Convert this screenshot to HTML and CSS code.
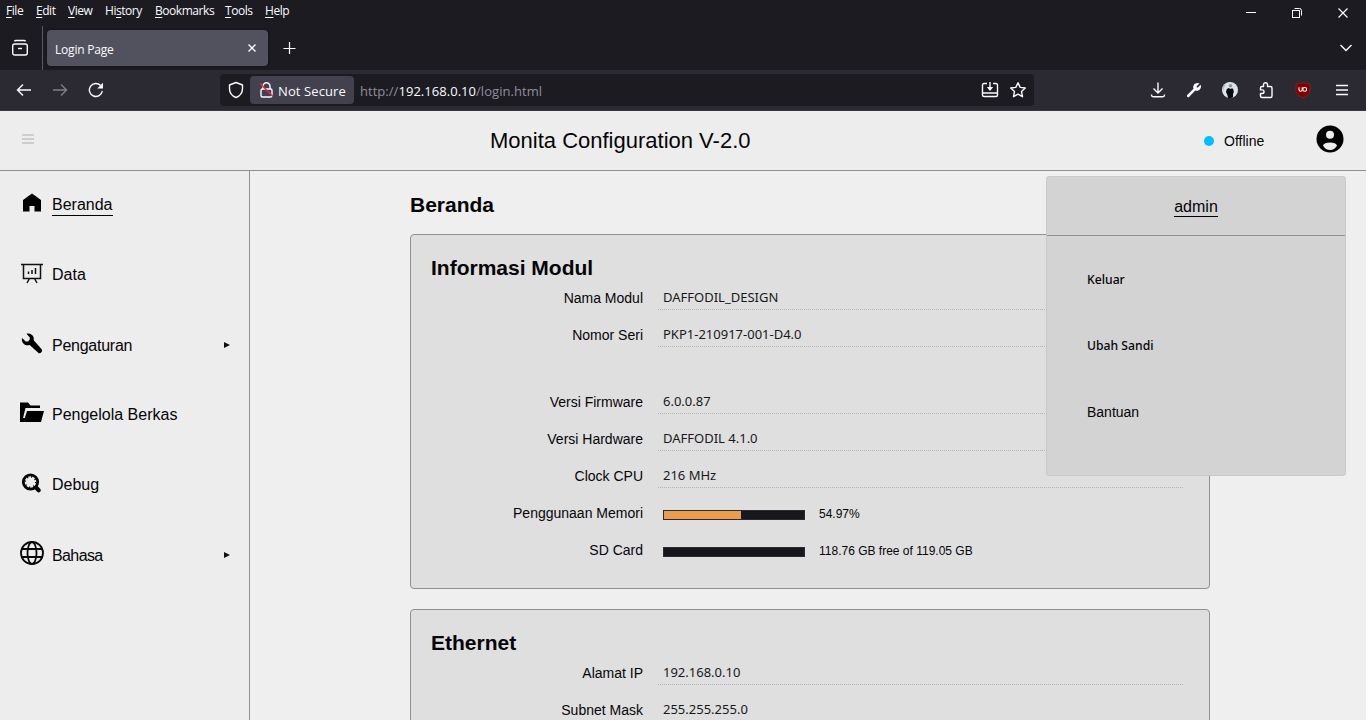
FILE: index.html
```html
<!DOCTYPE html>
<html lang="id">
<head>
<meta charset="utf-8">
<title>Login Page</title>
<link rel="stylesheet" href="styles.css">
</head>
<body>
<div class="window">
  <div class="menubar">
    <nav class="menus">
      <span class="m-file"><u>F</u>ile</span><span class="m-edit"><u>E</u>dit</span><span class="m-view"><u>V</u>iew</span><span class="m-history">Hi<u>s</u>tory</span><span class="m-book"><u>B</u>ookmarks</span><span class="m-tools"><u>T</u>ools</span><span><u>H</u>elp</span>
    </nav>
    <div class="winbtns">
      <svg width="12" height="12" viewBox="0 0 12 12"><path d="M1 5.5h10"/></svg>
      <svg width="12" height="12" viewBox="0 0 12 12"><rect x="1.500" y="3.500" width="7" height="7"/><path d="M3.500 1.500h5q2 0 2 2v5"/></svg>
      <svg width="12" height="12" viewBox="0 0 12 12"><path d="M1.500 1.500l9 9M10.500 1.500l-9 9" stroke-width="1.200"/></svg>
    </div>
  </div>
  <div class="tabstrip">
    <div class="recent"><svg width="18" height="18" viewBox="0 0 18 18"><path d="M3.300 2.200Q4 1.500 5 1.500h8q1 0 1.700.7"/><rect x="1.700" y="5" width="14.600" height="11" rx="2"/><path d="M7 9.500h4"/></svg></div>
    <div class="tab"><span>Login Page</span><svg width="10" height="10" viewBox="0 0 10 10"><path d="M1.500 1.500l7 7M8.500 1.500l-7 7"/></svg></div>
    <svg class="newtab" width="14" height="14" viewBox="0 0 14 14"><path d="M6.500 1v12M.5 7.500h12"/></svg>
    <svg class="alltabs" width="14" height="10" viewBox="0 0 14 10"><path d="M1.500 2L7 7.500 12.500 2"/></svg>
  </div>
  <div class="toolbar">
    <div class="navbtns">
      <svg width="16" height="16" viewBox="0 0 16 16"><path d="M15 8H1.500M7 2.500L1.500 8 7 13.500"/></svg>
      <svg class="dim" width="16" height="16" viewBox="0 0 16 16"><path d="M1 8h13.500M9 2.500L14.500 8 9 13.500"/></svg>
      <svg width="16" height="16" viewBox="0 0 16 16"><path d="M14.300 9A6.500 6.500 0 1 1 12.600 3.500"/><path class="solid" d="M15 .8v5.700H9.300z"/></svg>
    </div>
    <div class="urlbar">
      <svg class="shield" width="16" height="18" viewBox="0 0 16 18"><path d="M8 1.500L14.500 4v3.500c0 4.500-2.500 7.500-6.500 9-4-1.500-6.500-4.500-6.500-9V4z" stroke-linejoin="round"/></svg>
      <div class="insecure"><svg width="15" height="18" viewBox="0 0 15 18"><path d="M4 8V5.200a3.500 3.500 0 0 1 7 0V8"/><rect x="2" y="8" width="11" height="8" rx="1.500"/><path class="strike" d="M1 2.500l13 13"/></svg><span>Not Secure</span></div>
      <span class="url">http://<b>192.168.0.10</b>/login.html</span>
      <svg class="install" width="18" height="16" viewBox="0 0 18 16"><path d="M6 1.500H3q-1.500 0-1.500 1.500v10q0 1.500 1.500 1.500h12q1.500 0 1.500-1.500V3q0-1.500-1.500-1.500h-3M1.500 11h15M9 0v6"/><path class="solid" d="M5.800 5h6.400L9 9z"/></svg>
      <svg class="star" width="18" height="18" viewBox="0 0 18 18"><path d="M9 1.700l2.200 4.700 5.100.6-3.800 3.500 1 5.200L9 13.200l-4.500 2.500 1-5.200L1.700 7l5.100-.6z" stroke-linejoin="round"/></svg>
    </div>
    <div class="actions">
      <svg width="16" height="16" viewBox="0 0 16 16"><path d="M8 .5v10.500M3.500 6.500L8 11 12.500 6.500M1.500 12.500v.5q0 1.700 1.700 1.700h9.600q1.700 0 1.700-1.700v-.5"/></svg>
      <svg width="16" height="16" viewBox="0 0 16 16"><path class="solid" d="M11.500 1c.8 0 1.500.2 2 .5L10.700 4.300v1.200h1.200l2.700-2.700c.6 1.200.7 3.200-.8 4.700-1.200 1.200-3 1.500-4.500 1L3 15q-1.200.6-1.900-.2-.5-.8.1-1.700L7.500 6.800C6.500 4 8.500 1 11.500 1z"/></svg>
      <svg width="16" height="16" viewBox="0 0 16 16"><circle cx="8" cy="8" r="8" fill="#dce3e9" stroke="none"/><path d="M6.300 6Q4 7 4 10l1.500 3.500.5 2.300q3 .6 5-.5V12l.8-2q0-3-1.800-4L9 7z" fill="#08090d" stroke="none"/><circle cx="8.500" cy="3.700" r="1.800" fill="#8e979d" stroke="none"/><path d="M3 3q-2 2-2 5" stroke="#b5bec5"/></svg>
      <svg width="16" height="18" viewBox="0 0 16 18"><path d="M5.500 5.500V3.700a2 2 0 0 1 4 0v1.800h3q1.500 0 1.500 1.500v8q0 1.500-1.500 1.500H4q-1.500 0-1.500-1.500v-2.500h1.700a1.800 1.800 0 0 0 0-3.600H2.500V7Q2.500 5.500 4 5.500z" stroke-linejoin="round"/></svg>
      <svg width="16" height="16" viewBox="0 0 16 16"><path d="M8 .3Q11 2 15 2.200V8c0 4-3 6-7 7.700C4 14 1 12 1 8V2.200Q5 2 8 .3z" fill="#800000" stroke="#a22b2f" stroke-width=".5"/><path d="M4 5.300v2.500q0 1.500 1.600 1.500t1.600-1.500V5.300" stroke-width="1.100" stroke="#fff"/><circle cx="9.700" cy="7.400" r="1.900" stroke-width="1.100" stroke="#fff"/></svg>
      <svg class="appmenu" width="14" height="14" viewBox="0 0 14 14"><path d="M1 2.500h12M1 7h12M1 11.500h12"/></svg>
    </div>
  </div>

  <div class="page">
    <header class="top">
      <div class="burger"><i></i><i></i><i></i></div>
      <h1>Monita Configuration V-2.0</h1>
      <div class="status"><i></i>Offline</div>
      <svg class="avatar" width="28" height="28" viewBox="0 0 28 28"><circle cx="14" cy="14" r="13.500"/><circle class="light" cx="14" cy="9.700" r="4"/><path class="light" d="M7 20.500Q8 17.500 14 17.500t7 3Q18.500 25 14 25T7 20.500z"/></svg>
    </header>
    <div class="body">
      <aside class="side">
        <a class="item raised"><svg width="26" height="24" viewBox="0 0 26 24"><path d="M13 2.500l9 6.500v11.500h-6.500V15h-5v5.500H4V9z"/></svg><span class="active">Beranda</span></a>
        <a class="item"><svg width="26" height="24" viewBox="0 0 26 24"><path class="line" d="M2 2.500h22M4.500 2.500v14h17v-14M10.500 16.500L8 21M15.500 16.500L18 21M9.500 9.500V12M13 8v4M16.500 6v6"/></svg><span>Data</span></a>
        <a class="item sub settings"><svg width="26" height="24" viewBox="0 0 26 24"><path d="M7.500.7c4-1 8 2 7.200 6.500l8 9q.8 1.200 0 2.500l-1.200 1.300q-1.200.6-2.300-.3L10.700 12C6.500 13.300 2 10 3 5l3.700 3.500h2.500l1.600-2.300V4.500z"/></svg><span>Pengaturan</span><i class="arrow"></i></a>
        <a class="item raised"><svg width="26" height="24" viewBox="0 0 26 24"><path d="M1 21V1.500h8l2.500 3H21V7H6.500L4 17h1.800L8 10h17L22 21z"/></svg><span>Pengelola Berkas</span></a>
        <a class="item raised"><svg width="26" height="24" viewBox="0 0 26 24"><circle cx="11.500" cy="11" r="7.200" fill="none" stroke="#080808" stroke-width="2.800"/><circle cx="11.500" cy="11" r="5.300" fill="none" stroke="#080808" stroke-width="1.600" stroke-dasharray="1.100 3.060"/><path d="M17 16.500l2.700 2.700" stroke="#080808" stroke-width="4.200" stroke-linecap="round"/></svg><span>Debug</span></a>
        <a class="item raised sub lang"><svg width="26" height="26" viewBox="0 0 26 26"><g class="globe"><circle cx="13" cy="13" r="11"/><ellipse cx="13" cy="13" rx="4.500" ry="11"/><path d="M3 9h20M3 17h20"/></g></svg><span>Bahasa</span><i class="arrow"></i></a>
      </aside>
      <main class="main">
        <h2 class="heading">Beranda</h2>
        <section class="card">
          <h2>Informasi Modul</h2>
          <div class="row"><label>Nama Modul</label><div class="val">DAFFODIL_DESIGN</div></div>
          <div class="row gap"><label>Nomor Seri</label><div class="val">PKP1-210917-001-D4.0</div></div>
          <div class="row"><label>Versi Firmware</label><div class="val">6.0.0.87</div></div>
          <div class="row"><label>Versi Hardware</label><div class="val">DAFFODIL 4.1.0</div></div>
          <div class="row"><label>Clock CPU</label><div class="val">216 MHz</div></div>
          <div class="row"><label>Penggunaan Memori</label><div class="meter"><div class="bar"><i style="width:54.97%"></i></div><span>54.97%</span></div></div>
          <div class="row"><label>SD Card</label><div class="meter"><div class="bar"></div><span>118.76 GB free of 119.05 GB</span></div></div>
        </section>
        <section class="card">
          <h2>Ethernet</h2>
          <div class="row"><label>Alamat IP</label><div class="val">192.168.0.10</div></div>
          <div class="row"><label>Subnet Mask</label><div class="val">255.255.255.0</div></div>
        </section>
      </main>
    </div>
    <div class="popup">
      <div class="user"><span>admin</span></div>
      <a>Keluar</a>
      <a>Ubah Sandi</a>
      <a class="help">Bantuan</a>
    </div>
  </div>
</div>
</body>
</html>
```
FILE: styles.css
```css
* { box-sizing: border-box; }
body { margin: 0; font-family: "Liberation Sans", sans-serif; color: #050507; }
h1, h2 { margin: 0; }
svg { display: block; flex: none; }
.window { width: 1366px; height: 720px; overflow: hidden; display: flex; flex-direction: column; }

.menubar, .tabstrip, .toolbar { font-family: "Open Sans", sans-serif; color: #fbfbfe; display: flex; flex: none; }
.menubar svg, .tabstrip svg, .toolbar svg { fill: none; stroke: #fbfbfe; stroke-width: 1.4; }
.toolbar svg .solid { fill: #fbfbfe; stroke: none; }

.menubar { height: 26px; background: #1c1b22; justify-content: space-between; font-size: 12px; letter-spacing: -.45px; }
.menus { display: flex; padding-left: 6px; line-height: 22px; }
.menus u { text-underline-offset: 2px; }
.m-file { width: 30px; }
.m-edit { width: 32px; }
.m-view { width: 37px; }
.m-history { width: 50px; }
.m-book { width: 70px; }
.m-tools { width: 40px; }
.winbtns { display: flex; gap: 34px; padding: 7px 17px 0 0; }
.menubar .winbtns svg { stroke-width: 1; }

.tabstrip { height: 44px; background: #1c1b22; align-items: flex-start; font-size: 12px; letter-spacing: -.2px; }
.recent { width: 43px; height: 44px; border-right: 1px solid #5b5b63; padding: 13px 0 0 11px; }
.tab { width: 221px; height: 36px; margin: 4px 0 0 4px; border-radius: 4px; background: #52525e; display: flex; align-items: center; justify-content: space-between; padding: 0 11px 0 8px; box-shadow: 0 0 3px rgba(0,0,0,.5); }
.tab span { padding-top: 2px; }
.tabstrip .newtab { margin: 15px 0 0 15px; stroke-width: 1.2; }
.alltabs { margin: 17px 13px 0 auto; }

.toolbar { height: 41px; background: #2b2a33; border-bottom: 1px solid #38363f; align-items: center; }
.navbtns { display: flex; gap: 20px; width: 220px; padding-left: 16px; }
.dim { opacity: .4; }
.urlbar { width: 814px; height: 32px; border-radius: 4px; background: #1c1b22; display: flex; align-items: center; }
.shield { margin: 0 6px 0 8px; }
.insecure { width: 104px; height: 28px; border-radius: 4px; background: #42414d; display: flex; align-items: center; gap: 4px; padding-left: 9px; font-size: 13px; letter-spacing: .1px; white-space: nowrap; }
.insecure span, .url { padding-top: 2px; }
.toolbar svg .strike { stroke: #e22850; }
.url { margin-left: 6px; font-size: 13px; letter-spacing: .04px; color: #8f8f98; }
.url b { font-weight: 400; color: #fbfbfe; }
.install { margin-left: auto; }
.star { margin: 0 7px 0 10px; }
.actions { margin-left: auto; padding-right: 17px; display: flex; align-items: center; gap: 20.300px; }
.appmenu { margin-left: 4px; }

.page { position: relative; flex: 1; min-height: 0; background: #efefef; display: flex; flex-direction: column; }
.top { height: 60px; flex: none; background: #ededed; border-bottom: 1px solid #909092; display: flex; align-items: center; }
.burger { width: 490px; padding: 0 0 3px 22px; display: flex; flex-direction: column; gap: 2px; }
.burger i { width: 12px; height: 2px; background: #cdcdcd; }
.top h1 { font-weight: 400; font-size: 22px; line-height: 30px; width: 714px; white-space: nowrap; }
.status { display: flex; align-items: center; gap: 10px; font-size: 14px; }
.status i { width: 10px; height: 10px; border-radius: 50%; background: #00bfff; }
.avatar { margin: 0 22px 4px auto; }
.light { fill: #ededed; }

.body { flex: 1; min-height: 0; display: flex; }
.side { width: 250px; flex: none; background: #ededed; border-right: 1px solid #909092; padding: 20px 0 0 19px; display: flex; flex-direction: column; gap: 44px; }
.item { display: flex; align-items: center; height: 26px; font-size: 16px; gap: 7px; padding-right: 19px; }
.item span { line-height: 20px; padding-top: 2px; }
.raised svg { margin-bottom: 2px; }
.item .active { border-bottom: 1px solid #000; padding: 3px 0 0; }
.sub span { padding-top: 4px; }
.sub .arrow { margin-top: 2px; }
.settings svg { margin-top: 2px; }
.settings span { letter-spacing: -.25px; }
.lang span { letter-spacing: -.6px; }
.line { fill: none; stroke: #111; stroke-width: 1.500; }
.globe { fill: none; stroke: #080808; stroke-width: 1.800; }
.arrow { margin-left: auto; border-left: 6px solid #111; border-top: 3px solid transparent; border-bottom: 3px solid transparent; }

.main { padding: 21px 0 0 160px; }
.heading { font-size: 21px; line-height: 26px; margin-bottom: 16px; }
.card { width: 800px; border: 1px solid #909092; border-radius: 4px; background: #dfdfdf; padding: 21px 26px 15px 20px; margin-bottom: 20px; }
.card h2 { font-size: 21px; line-height: 24px; margin-bottom: 4px; }
.row { height: 26px; display: flex; margin-bottom: 11px; }
.row.gap { margin-bottom: 41px; }
.row label { width: 212px; margin-right: 15px; text-align: right; font-size: 14px; line-height: 28px; }
.val { flex: 1; border-bottom: 1px dotted #b3b3b3; padding-left: 5px; font: 13px/27px "Noto Sans", sans-serif; color: #18181c; }
.meter { display: flex; align-items: center; gap: 14px; padding: 4px 0 0 5px; font-size: 12px; }
.bar { width: 142px; height: 10px; border: 1px solid #2b2a33; background: #18171c; margin-top: 2px; }
.bar i { display: block; height: 8px; background: #eb9d50; }

.popup { position: absolute; left: 1046px; top: 65px; width: 300px; height: 300px; border: 1px solid #c8c8c8; border-radius: 3px; background: #d3d3d3; font: 500 12.200px "Noto Sans", sans-serif; display: flex; flex-direction: column; }
.user { height: 59px; border-bottom: 1px solid #909092; display: flex; align-items: center; justify-content: center; font: 16px/19px "Liberation Sans", sans-serif; margin-bottom: 34px; }
.user span { border-bottom: 1px solid #000; padding-top: 2px; line-height: 18px; }
.popup a { padding-left: 40px; line-height: 20px; margin-bottom: 46px; }
.popup .help { font: 14px/20px "Liberation Sans", sans-serif; }
```
